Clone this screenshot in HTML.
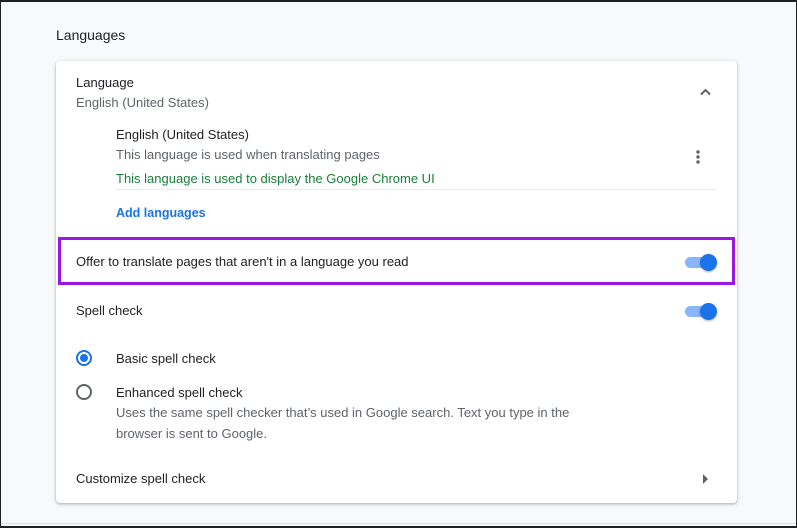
<!DOCTYPE html>
<html><head><meta charset="utf-8"><style>
*{margin:0;padding:0;box-sizing:border-box}
body{width:797px;height:528px;overflow:hidden;background:#f8f9fa;font-family:"Liberation Sans",Arial,sans-serif;position:relative}
.frame{position:absolute;left:0;top:0;width:797px;height:528px;border:2px solid #202124;border-left-width:1px;border-right-width:1px;pointer-events:none}
.t{position:absolute;font-size:13px;color:#202124;white-space:nowrap}
.g{color:#5f6368}
.card{position:absolute;left:56px;top:61px;width:681px;height:442px;background:#fff;border-radius:4px;box-shadow:0 1px 2px rgba(60,64,67,.3),0 1px 3px 1px rgba(60,64,67,.12)}
.tog{position:absolute;width:34px;height:18px}
.tog .tr{position:absolute;left:1px;top:4px;width:28px;height:11px;border-radius:6px;background:#8ab4f8}
.tog .kn{position:absolute;left:16px;top:1px;width:17px;height:17px;border-radius:50%;background:#1a73e8;box-shadow:0 1px 2px rgba(0,0,0,.3)}
</style></head><body>
<div class="t" style="left:56px;top:27px;font-size:14px">Languages</div>
<div class="card"></div>
<div class="t" style="left:76px;top:75px">Language</div>
<div class="t g" style="left:76px;top:95px">English (United States)</div>
<svg style="position:absolute;left:699px;top:87px" width="14" height="10"><path d="M2 7.5 L6.5 3 L11 7.5" fill="none" stroke="#5f6368" stroke-width="2"/></svg>
<div class="t" style="left:116px;top:127px">English (United States)</div>
<div class="t g" style="left:116px;top:147px">This language is used when translating pages</div>
<div class="t" style="left:116px;top:171px;color:#188038">This language is used to display the Google Chrome UI</div>
<svg style="position:absolute;left:694px;top:149px" width="8" height="16"><circle cx="4" cy="3" r="1.7" fill="#5f6368"/><circle cx="4" cy="8" r="1.7" fill="#5f6368"/><circle cx="4" cy="13" r="1.7" fill="#5f6368"/></svg>
<div style="position:absolute;left:116px;top:189px;width:600px;height:1px;background:#e8eaed"></div>
<div class="t" style="left:116px;top:206px;color:#1a73e8;font-weight:bold;font-size:12.5px">Add languages</div>
<div style="position:absolute;left:58px;top:237px;width:677px;height:48px;border:3px solid #9b17e0"></div>
<div class="t" style="left:76px;top:254px">Offer to translate pages that aren't in a language you read</div>
<div class="tog" style="left:684px;top:253px"><div class="tr"></div><div class="kn"></div></div>
<div class="t" style="left:76px;top:303px">Spell check</div>
<div class="tog" style="left:684px;top:302px"><div class="tr"></div><div class="kn"></div></div>
<div style="position:absolute;left:76px;top:350px;width:16px;height:16px;border-radius:50%;border:2px solid #1a73e8"><div style="position:absolute;left:2px;top:2px;width:8px;height:8px;border-radius:50%;background:#1a73e8"></div></div>
<div class="t" style="left:116px;top:351px">Basic spell check</div>
<div style="position:absolute;left:76px;top:384px;width:16px;height:16px;border-radius:50%;border:2px solid #5f6368"></div>
<div class="t" style="left:116px;top:385px">Enhanced spell check</div>
<div class="t g" style="left:116px;top:405px">Uses the same spell checker that’s used in Google search. Text you type in the</div>
<div class="t g" style="left:116px;top:426px">browser is sent to Google.</div>
<div class="t" style="left:76px;top:471px">Customize spell check</div>
<svg style="position:absolute;left:703px;top:474px" width="6" height="10"><path d="M0 0 L5 5 L0 10Z" fill="#5f6368"/></svg>
<div style="position:absolute;left:0;top:523px;width:797px;height:1px;background:#e0e0e0"></div>
<div class="frame"></div>
</body></html>
